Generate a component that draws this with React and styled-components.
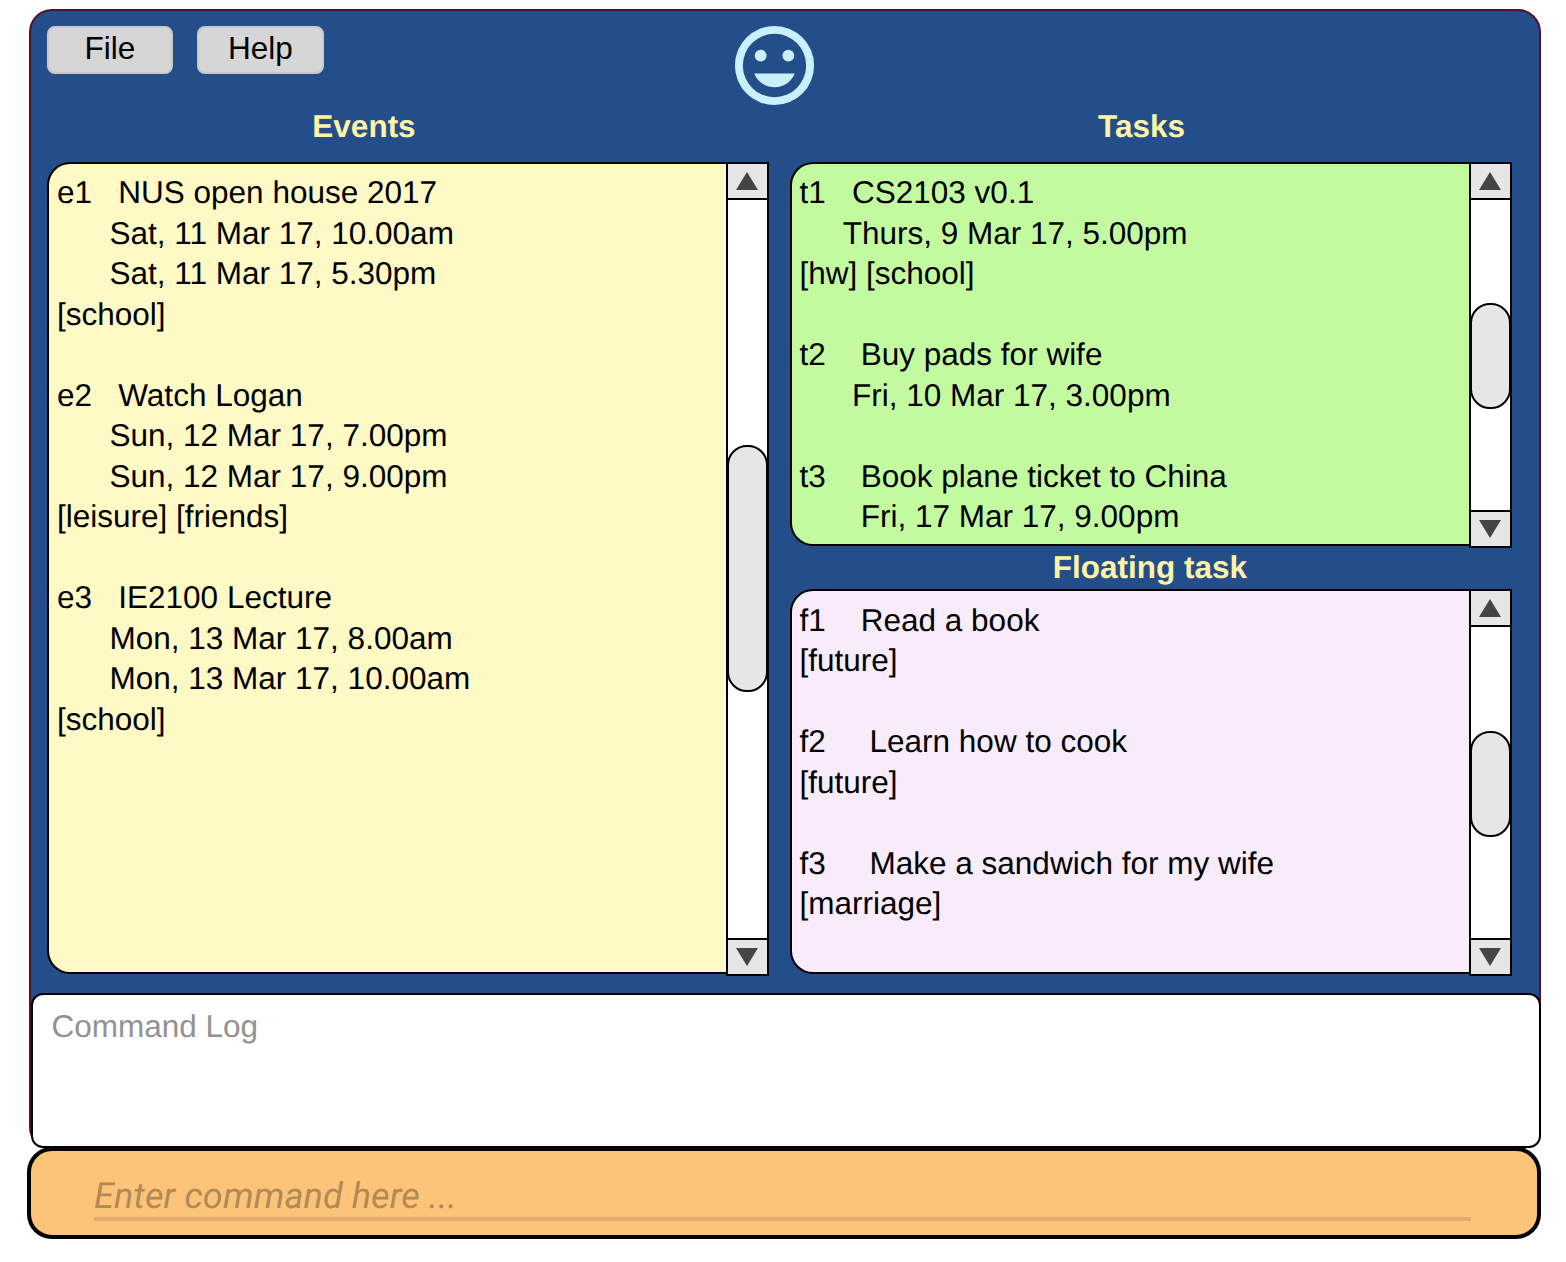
import React from "react";
import styled, { createGlobalStyle } from "styled-components";

const GlobalStyle = createGlobalStyle`
  * { box-sizing: border-box; }
  body {
    margin: 0;
    background: #ffffff;
    font-family: "Liberation Sans", Arial, sans-serif;
    font-size: 31.5px;
    line-height: 40.5px;
    color: #000000;
    text-rendering: geometricPrecision;
  }
`;

const Page = styled.main`
  display: flex;
  flex-direction: column;
  width: 1566px;
  height: 1262px;
  padding: 9px 25px 0 29px;
  overflow: hidden;
`;

const Window = styled.section`
  display: flex;
  flex-direction: column;
  flex: none;
  height: 1141px;
  border: 2px solid #5a0c2c;
  border-radius: 23px;
  background: #244e8a;
`;

const Header = styled.header`
  display: grid;
  grid-template-columns: 680px 1fr;
  height: 94px;
  padding: 7px 0 0 16px;
`;

const MenuBar = styled.nav`
  display: flex;
  align-items: flex-start;
  gap: 24px;
  padding-top: 8px;
`;

const MenuButton = styled.button`
  width: ${(p) => p.$width}px;
  height: 48px;
  padding: 0 0 4px;
  border: 2px solid #c9c9c9;
  border-radius: 8px;
  background: #d6d6d6;
  font: inherit;
  line-height: 40px;
  color: #000000;
  text-align: center;
`;

const Smiley = styled.svg`
  display: block;
  width: 95px;
  height: 95px;
  fill: #c9f0ff;
`;

const Columns = styled.div`
  display: grid;
  grid-template-columns: 722px 722px;
  column-gap: 21px;
  height: 889px;
  padding-left: 16px;
`;

const Column = styled.div`
  display: flex;
  flex-direction: column;
`;

const Title = styled.h2`
  height: ${(p) => p.$height}px;
  margin: 0;
  padding: ${(p) => p.$pad};
  font-size: 31.5px;
  font-weight: 700;
  line-height: 40px;
  color: #fff3a8;
  text-align: center;
`;

const Panel = styled.div`
  display: flex;
  flex: none;
  height: ${(p) => p.$height}px;
`;

const List = styled.div`
  flex: 1;
  min-width: 0;
  padding: ${(p) => p.$top}px 0 0 ${(p) => p.$left}px;
  border: 2px solid #000000;
  border-right: 0;
  border-radius: 23px 0 0 23px;
  background: ${(p) => p.$color};
  overflow: hidden;
`;

const Line = styled.div`
  height: 40.5px;
  white-space: pre;
`;

const Scrollbar = styled.div`
  display: flex;
  flex-direction: column;
  flex: none;
  width: 43px;
  margin-bottom: -2px;
  border: 2px solid #000000;
  background: #ffffff;
`;

const ArrowBox = styled.div`
  display: flex;
  justify-content: center;
  flex: none;
  height: 36px;
  padding-top: 8px;
  padding-right: 1px;
  background: #e6e6e6;
  border: 0 solid #000000;
  border-width: ${(p) => (p.$down ? "2px 0 0" : "0 0 2px")};
`;

const Arrow = styled.svg`
  width: 22px;
  height: 18px;
  fill: #454545;
`;

const Track = styled.div`
  flex: 1;
  padding-top: ${(p) => p.$offset}px;
`;

const Thumb = styled.div`
  height: ${(p) => p.$size}px;
  margin: 0 -1px;
  border: 2px solid #000000;
  border-radius: 20px;
  background: #e6e6e6;
`;

const CommandLog = styled.div`
  flex: none;
  height: 155px;
  margin: 1px -2px 0 0;
  padding: 10.5px 18.5px;
  border: 2px solid #000000;
  border-radius: 12px;
  background: #ffffff;
  color: #929292;
`;

const CommandBar = styled.div`
  flex: none;
  height: 92px;
  margin: -3px 0 0 -2px;
  padding: 20px 66px 0 63px;
  border: 4px solid #000000;
  border-radius: 25px;
  background: #fdc479;
  z-index: 1;
`;

const CommandInput = styled.div`
  height: 50px;
  border-bottom: 4px solid #e0ad6b;
  font-family: Roboto, sans-serif;
  font-size: 36px;
  font-style: italic;
  line-height: 50px;
  letter-spacing: 0.12px;
  color: #b18a55;
`;

const events = [
  "e1   NUS open house 2017",
  "      Sat, 11 Mar 17, 10.00am",
  "      Sat, 11 Mar 17, 5.30pm",
  "[school]",
  "",
  "e2   Watch Logan",
  "      Sun, 12 Mar 17, 7.00pm",
  "      Sun, 12 Mar 17, 9.00pm",
  "[leisure] [friends]",
  "",
  "e3   IE2100 Lecture",
  "      Mon, 13 Mar 17, 8.00am",
  "      Mon, 13 Mar 17, 10.00am",
  "[school]",
];

const tasks = [
  "t1   CS2103 v0.1",
  "     Thurs, 9 Mar 17, 5.00pm",
  "[hw] [school]",
  "",
  "t2    Buy pads for wife",
  "      Fri, 10 Mar 17, 3.00pm",
  "",
  "t3    Book plane ticket to China",
  "       Fri, 17 Mar 17, 9.00pm",
];

const floating = [
  "f1    Read a book",
  "[future]",
  "",
  "f2     Learn how to cook",
  "[future]",
  "",
  "f3     Make a sandwich for my wife",
  "[marriage]",
];

function ScrollPanel({ lines, color, height, top = 8, left = 7.5, offset, size }) {
  return (
    <Panel $height={height}>
      <List $color={color} $top={top} $left={left}>
        {lines.map((line, i) => (
          <Line key={i}>{line}</Line>
        ))}
      </List>
      <Scrollbar>
        <ArrowBox>
          <Arrow viewBox="0 0 22 18">
            <path d="M11 0L22 18H0z" />
          </Arrow>
        </ArrowBox>
        <Track $offset={offset}>
          <Thumb $size={size} />
        </Track>
        <ArrowBox $down>
          <Arrow viewBox="0 0 22 18">
            <path d="M0 0H22L11 18z" />
          </Arrow>
        </ArrowBox>
      </Scrollbar>
    </Panel>
  );
}

export default function App() {
  return (
    <>
      <GlobalStyle />
      <Page>
        <Window>
          <Header>
            <MenuBar>
              <MenuButton $width={126}>File</MenuButton>
              <MenuButton $width={127}>Help</MenuButton>
            </MenuBar>
            <Smiley viewBox="0 0 24 24">
              <path
                fillRule="evenodd"
                d="M12 2a10 10 0 1 0 0 20a10 10 0 1 0 0-20zM12 4a8 8 0 1 1 0 16a8 8 0 1 1 0-16z"
              />
              <circle cx="8.5" cy="9.5" r="1.5" />
              <circle cx="15.5" cy="9.5" r="1.5" />
              <path d="M12 17.5c2.33 0 4.31-1.46 5.11-3.5H6.89c.8 2.04 2.78 3.5 5.11 3.5z" />
            </Smiley>
          </Header>
          <Columns>
            <Column>
              <Title $height={57} $pad="1px 88px 0 0">Events</Title>
              <ScrollPanel lines={events} color="#fffac5" height={812} left={8} offset={245} size={247} />
            </Column>
            <Column>
              <Title $height={57} $pad="1px 19px 0 0">Tasks</Title>
              <ScrollPanel lines={tasks} color="#c3faa0" height={384} offset={103} size={106} />
              <Title $height={43} $pad="1px 2px 0 0">Floating task</Title>
              <ScrollPanel lines={floating} color="#f8ecfb" height={385} top={8.5} offset={104} size={106} />
            </Column>
          </Columns>
          <CommandLog>Command Log</CommandLog>
        </Window>
        <CommandBar>
          <CommandInput>Enter command here ...</CommandInput>
        </CommandBar>
      </Page>
    </>
  );
}
